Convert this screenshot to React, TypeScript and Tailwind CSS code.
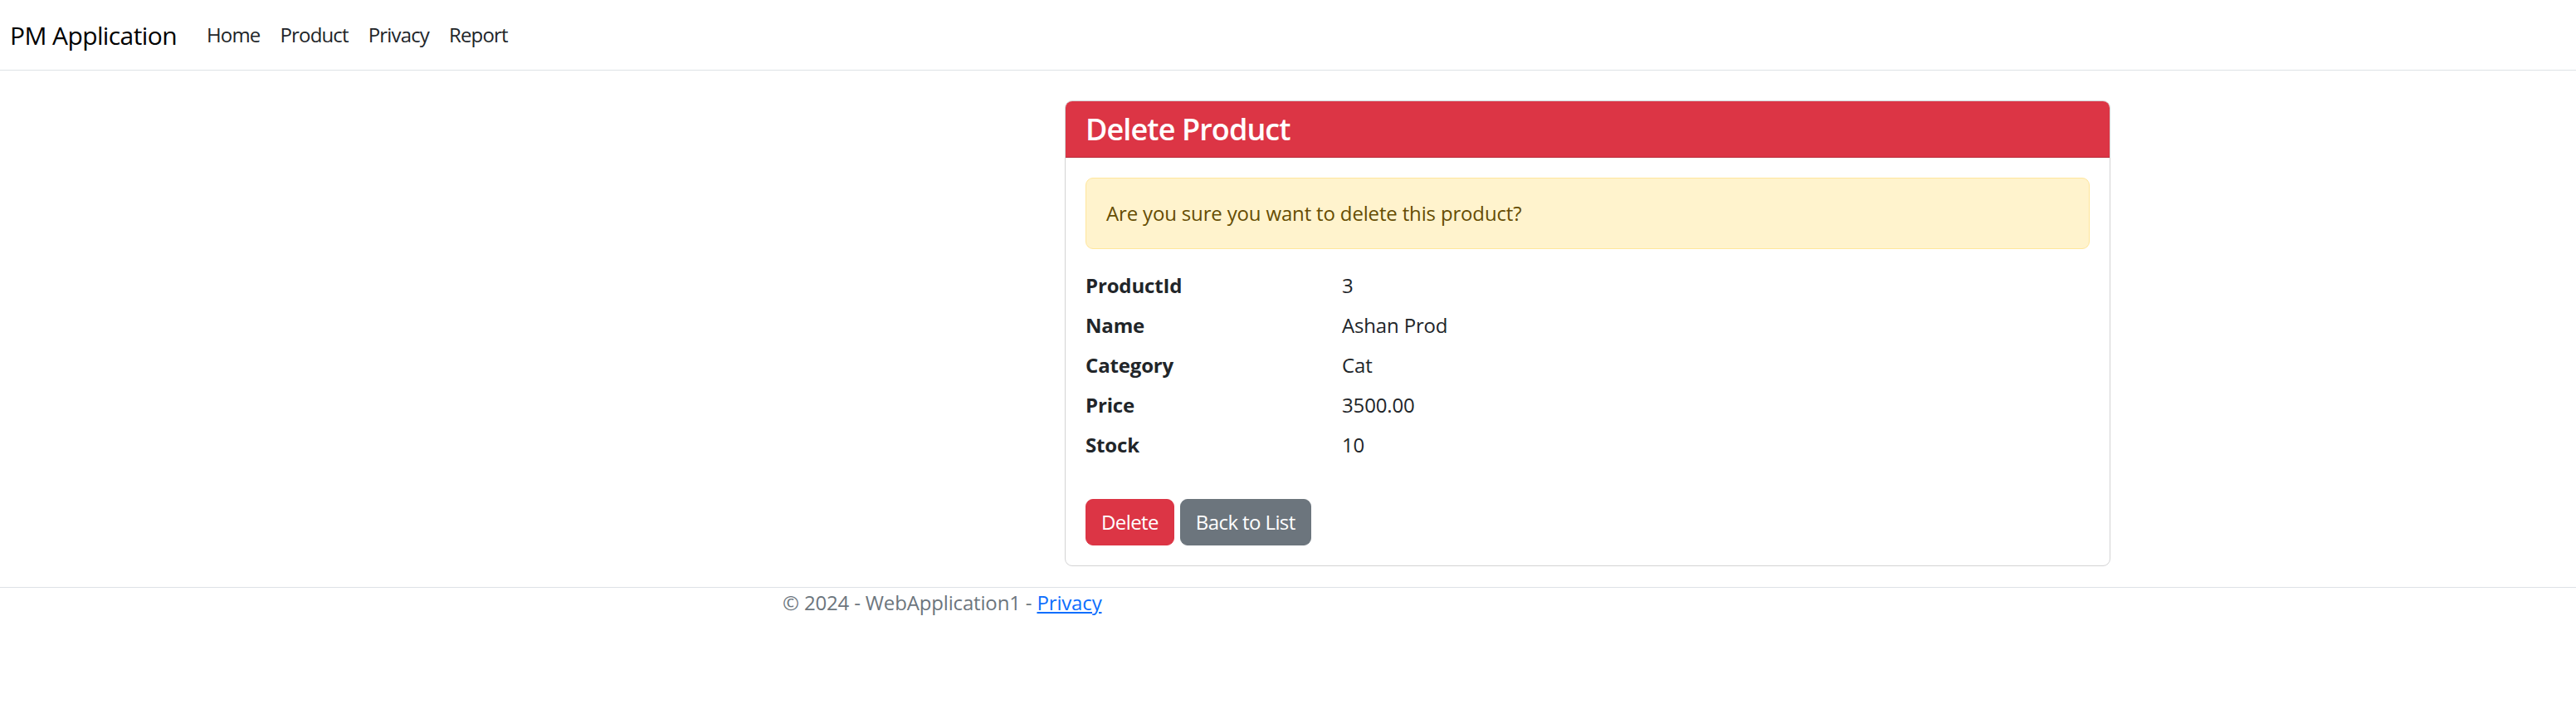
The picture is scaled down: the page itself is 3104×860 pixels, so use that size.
import React from 'react';

const rows: [string, string][] = [
  ['ProductId', '3'],
  ['Name', 'Ashan Prod'],
  ['Category', 'Cat'],
  ['Price', '3500.00'],
  ['Stock', '10'],
];

const links = ['Home', 'Product', 'Privacy', 'Report'];

export default function App() {
  return (
    <div className="min-h-[860px] bg-white text-[#212529] tracking-[-0.01em] font-['Open_Sans',sans-serif]">
      {/* Navbar */}
      <nav className="h-[85px] border-b border-[#dee2e6] flex items-center pl-[12px]">
        <a className="text-[30px] leading-[45px] tracking-[-0.02em] text-black mr-[24px]">PM Application</a>
        <ul className="flex">
          {links.map(l => (
            <li key={l}>
              <a className="block px-[12px] text-[24px] leading-[36px] tracking-[-0.035em] text-[#212529]">{l}</a>
            </li>
          ))}
        </ul>
      </nav>

      {/* Delete card */}
      <main className="pt-[36px] pl-[1283px]">
        <div className="w-[1260px] border border-[#d3d3d4] rounded-[9px] overflow-hidden">
          <div className="bg-[#dc3545] border-b border-[#b62c39] px-[24px] py-[12px]">
            <h4 className="text-white text-[36px] leading-[43px] font-semibold tracking-[-0.025em]">Delete Product</h4>
          </div>
          <div className="p-[24px]">
            <div className="bg-[#fff3cd] border border-[#ffe69c] text-[#664d03] rounded-[9px] p-[24px] text-[24px] leading-[36px] mb-[24px]">
              Are you sure you want to delete this product?
            </div>
            <dl className="grid grid-cols-[309px_1fr] text-[24px] leading-[36px] pt-[2px] -mb-[2px]">
              {rows.map(([k, v]) => (
                <React.Fragment key={k}>
                  <dt className="font-bold mb-[12px]">{k}</dt>
                  <dd className="mb-[12px]">{v}</dd>
                </React.Fragment>
              ))}
            </dl>
            <div className="flex gap-[7px] mt-[37px]">
              <button className="bg-[#dc3545] border border-[#dc3545] text-white rounded-[9px] px-[18px] py-[9px] text-[24px] leading-[36px] tracking-[-0.025em]">
                Delete
              </button>
              <button className="bg-[#6c757d] border border-[#6c757d] text-white rounded-[9px] px-[18px] py-[9px] text-[24px] leading-[36px] tracking-[-0.025em]">
                Back to List
              </button>
            </div>
          </div>
        </div>
      </main>

      {/* Footer */}
      <footer className="mt-[25px] border-t border-[#dee2e6] pl-[943px] text-[24px] leading-[36px] text-[#6c757d]">
        © 2024 - WebApplication1 - <a className="text-[#0d6efd] underline">Privacy</a>
      </footer>
    </div>
  );
}
